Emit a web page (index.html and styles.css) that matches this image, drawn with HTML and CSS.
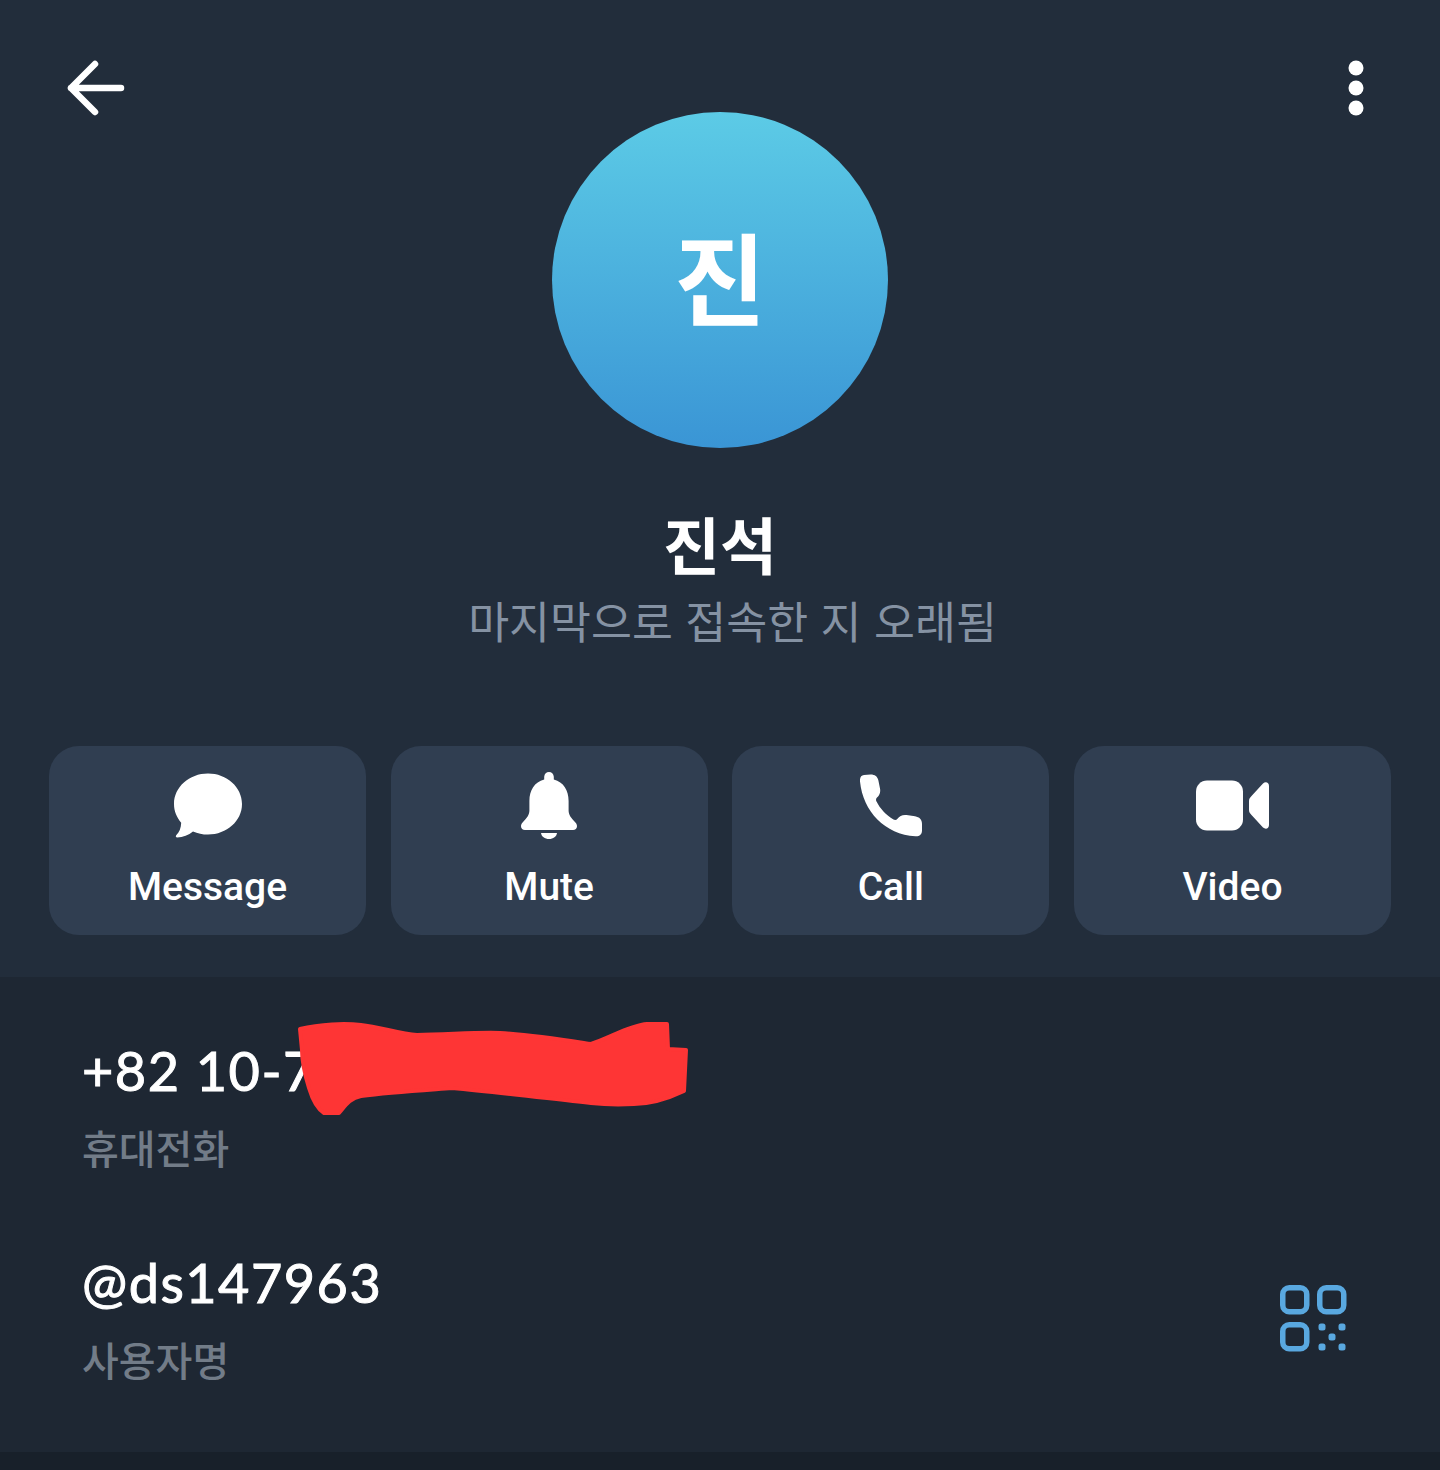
FILE: index.html
```html
<!DOCTYPE html>
<html lang="ko">
<head>
    <meta charset="UTF-8">
    <meta name="viewport" content="width=device-width, initial-scale=1.0">
    <title>진석</title>
    <link rel="stylesheet" href="styles.css">
</head>
<body>

    <!-- Perfil -->
    <section class="profile">
        <div class="topbar">
            <svg class="back-icon" width="58" height="56" viewBox="0 0 58 56" fill="none" stroke="#fff" stroke-width="6.5" stroke-linecap="round" stroke-linejoin="round">
                <path d="M4 28H54M28 4L4 28L28 52"/>
            </svg>
            <svg class="more-icon" width="16" height="56" viewBox="0 0 16 56" fill="#fff">
                <circle cx="8" cy="8" r="7.5"/>
                <circle cx="8" cy="28" r="7.5"/>
                <circle cx="8" cy="48" r="7.5"/>
            </svg>
        </div>

        <div class="avatar">진</div>
        <h1 class="name">진석</h1>
        <p class="status">마지막으로 접속한 지 오래됨</p>

        <div class="actions">
            <a class="action">
                <svg width="68" height="64" viewBox="0 0 68 64" fill="#fff">
                    <path d="M34 0C52.8 0 68 13.6 68 30.5S52.8 61 34 61C28.6 61 23.6 59.9 19 57.9C14.6 61.6 9 63.8 3.2 64C1.9 64 1.4 62.7 2.2 61.8C5.3 58.5 7 54.8 7.2 49.2C2.7 44 0 37.6 0 30.5C0 13.6 15.2 0 34 0Z"/>
                </svg>
                <span>Message</span>
            </a>
            <a class="action">
                <svg width="56" height="67" viewBox="0 0 56 67" fill="#fff">
                    <path d="M28 0C30.6 0 32.6 2 32.8 4.8V7.6C42.6 10 47.6 18.6 47.6 29V38.6C47.6 43 50 46 54.4 50.6C55.4 51.6 56 53 56 54.2C56 56.4 54.4 58 52 58H4C1.6 58 0 56.4 0 54.2C0 53 .6 51.6 1.6 50.6C6 46 8.4 43 8.4 38.6V29C8.4 18.6 13.4 10 23.2 7.6V4.8C23.4 2 25.4 0 28 0Z"/>
                    <path d="M20 61H36C35.6 64.6 32.2 67 28 67S20.4 64.6 20 61Z"/>
                </svg>
                <span>Mute</span>
            </a>
            <a class="action">
                <svg width="62" height="62" viewBox="0 0 62 62" fill="#fff">
                    <path d="M4 .5L10.5 0C15 0 17.5 2 18.4 6L20 14C20.8 18 19.4 20.8 17 23C15.8 24.2 15.8 25.6 16.5 27C20 34 26 40.5 33.5 45C35 45.8 36.5 45.5 37.5 44.2C39.5 41.5 42.5 40 46.5 40.5L55 41.8C59.5 42.6 62 45 62 49.5V56C62 60 59.5 62 55.5 61.8C25 60 3 37 0 7C-.3 3 1 .8 4 .5Z"/>
                </svg>
                <span>Call</span>
            </a>
            <a class="action">
                <svg width="73" height="50" viewBox="0 0 73 50" fill="#fff">
                    <rect x="0" y="0" width="47" height="50" rx="11"/>
                    <path d="M53 20.5C53 18.5 54 17 55.5 15.5L67 3C69.5 .8 73 1.8 73 5.5V44.5C73 48.2 69.5 49.2 67 47L55.5 34.5C54 33 53 31.5 53 29.5Z"/>
                </svg>
                <span>Video</span>
            </a>
        </div>
    </section>

    <!-- Contato -->
    <section class="info">
        <div class="info-row">
            <div>
                <div class="info-value">+82 10-7</div>
                <div class="info-label">휴대전화</div>
            </div>
        </div>
        <div class="info-row">
            <div>
                <div class="info-value">@ds147963</div>
                <div class="info-label">사용자명</div>
            </div>
            <svg class="qr-icon" width="67" height="67" viewBox="0 0 67 67" fill="none" stroke="#59a8e0" stroke-width="5.5">
                <rect x="2.75" y="2.75" width="24" height="24" rx="6.5"/>
                <rect x="39.75" y="2.75" width="24" height="24" rx="6.5"/>
                <rect x="2.75" y="39.75" width="24" height="24" rx="6.5"/>
                <g fill="#59a8e0" stroke="none">
                    <rect x="38.5" y="38.5" width="7" height="7" rx="2.5"/>
                    <rect x="58.5" y="38.5" width="7" height="7" rx="2.5"/>
                    <rect x="48.5" y="48.5" width="7" height="7" rx="2.5"/>
                    <rect x="38.5" y="58.5" width="7" height="7" rx="2.5"/>
                    <rect x="58.5" y="58.5" width="7" height="7" rx="2.5"/>
                </g>
            </svg>
        </div>

        <!-- Rabisco vermelho por cima do numero -->
        <svg class="scribble" width="1440" height="475" viewBox="0 977 1440 475" fill="#fe3535" stroke="#fe3535" stroke-width="4" stroke-linejoin="round">
            <path d="M300 1029C320 1024 345 1023 361 1025C380 1027 400 1034 417 1035C445 1035 475 1032 500 1033C535 1035 565 1040 591 1044C610 1038 630 1025 647 1024L667 1024L668 1049L686 1050L684 1091C665 1100 650 1104 634 1104C615 1105 600 1104 591 1103C545 1098 495 1092 452 1088C425 1090 390 1092 361 1096C350 1098 345 1106 339 1113L324 1113C316 1108 312 1098 309 1088C305 1075 302 1060 302 1050Z"/>
        </svg>
    </section>

    <div class="bottom-strip"></div>

</body>
</html>
```

FILE: styles.css
```css
* {
    margin: 0;
    padding: 0;
    box-sizing: border-box;
}

body {
    background-color: #18202a;
    color: white;
    font-family: "Noto Sans CJK KR", "Noto Sans", sans-serif;
    height: 1470px;
    overflow: hidden;
}

/* Perfil */
.profile {
    height: 977px;
    background-color: #222d3b;
    display: flex;
    flex-direction: column;
    align-items: center;
}

.topbar {
    width: 100%;
    height: 112px;
    padding: 60px 76px 0 67px;
    display: flex;
    justify-content: space-between;
    align-items: flex-start;
}

.avatar {
    width: 336px;
    height: 336px;
    border-radius: 50%;
    background: linear-gradient(to bottom, #5ccbe6, #3a95d5);
    font-size: 100px;
    font-weight: 700;
    line-height: 326px;
    text-align: center;
}

.name {
    margin-top: 53px;
    font-size: 62px;
    font-weight: 700;
    line-height: 84px;
}

.status {
    margin-top: 3px;
    padding-left: 25px;
    font-size: 44.5px;
    line-height: 64px;
    color: #8592a3;
    font-weight: 400;
}

/* Botoes */
.actions {
    width: 100%;
    margin-top: 94px;
    padding: 0 49px;
    display: grid;
    grid-template-columns: repeat(4, 1fr);
    gap: 24.67px;
}

.action {
    height: 189px;
    padding-top: 26px;
    background-color: #303e51;
    border-radius: 30px;
    display: flex;
    flex-direction: column;
    align-items: center;
    color: white;
}

.action svg {
    height: 67px;
    flex: none;
}

.action span {
    margin-top: 22px;
    font-family: Roboto, sans-serif;
    font-size: 39px;
    font-weight: 500;
    line-height: 52px;
}

/* Contato */
.info {
    position: relative;
    height: 475px;
    padding: 0 93px 0 82px;
    background-color: #1e2733;
}

.info-row {
    display: flex;
    justify-content: space-between;
    align-items: center;
}

.info-row:first-child {
    padding-top: 59px;
    height: 200px;
}

.info-row:last-of-type {
    padding-top: 22px;
    height: 260px;
}

.info-value {
    font-family: Lato, sans-serif;
    font-size: 54px;
    line-height: 70px;
    letter-spacing: 1.5px;
    -webkit-text-stroke: 1px white;
}

.info-label {
    margin-top: 11px;
    font-size: 40px;
    font-weight: 500;
    line-height: 60px;
    color: #727c88;
}

.qr-icon {
    flex: none;
}

.scribble {
    position: absolute;
    top: 0;
    left: 0;
}

.bottom-strip {
    height: 18px;
    background-color: #18202a;
}
```
